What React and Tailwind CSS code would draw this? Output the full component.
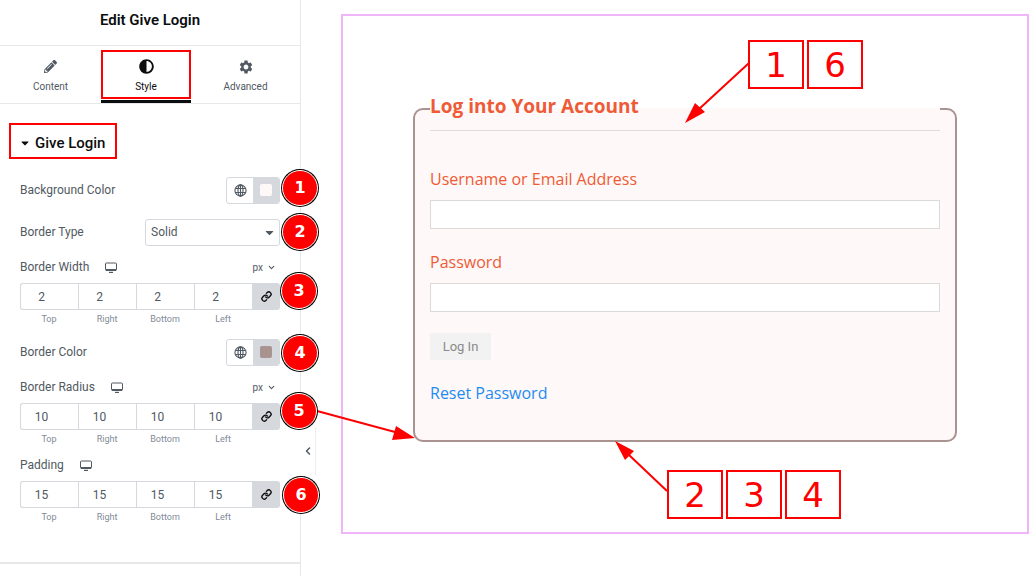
import { useState } from 'react';
import { FaAdjust, FaCaretDown, FaPencilAlt } from 'react-icons/fa';
import { MdSettings } from 'react-icons/md';
import { ChevronDown, ChevronLeft, Link } from 'lucide-react';

const SIDES = ['Top', 'Right', 'Bottom', 'Left'];

// numbered steps next to the panel controls
const BADGES = [
  { n: 1, pos: 'left-[282px] top-[170px]' },
  { n: 2, pos: 'left-[282px] top-[214px]' },
  { n: 3, pos: 'left-[281px] top-[273px]' },
  { n: 4, pos: 'left-[282px] top-[335px]' },
  { n: 5, pos: 'left-[281px] top-[393px]' },
  { n: 6, pos: 'left-[283px] top-[477px]' },
];

function GlobeIcon() {
  return (
    <svg viewBox="0 0 14 14" className="size-[13px]" fill="none" stroke="currentColor" strokeWidth="1.2">
      <circle cx="7" cy="7" r="6" />
      <ellipse cx="7" cy="7" rx="2.7" ry="6" />
      <path d="M7 1v12M1.6 4.8h10.8M1.6 9.2h10.8" />
    </svg>
  );
}

function DesktopIcon() {
  return (
    <svg viewBox="0 0 12 11" className="h-[11px] w-3" fill="none" stroke="currentColor">
      <rect x="0.5" y="1" width="11" height="7.5" rx="1" />
      <path d="M1 8h10" strokeWidth="2" />
      <path d="M4 10.4h4" strokeWidth="1.2" />
    </svg>
  );
}

function Tab({ icon, label, active, className, onClick }) {
  return (
    <button
      type="button"
      onClick={onClick}
      className={`relative flex h-[57px] flex-col items-center pt-3 text-[10px] leading-4 ${active ? 'border-b-[3px] border-[#0c0d0e] text-[#0c0d0e]' : 'text-[#515962]'} ${className}`}
    >
      <span className="flex h-[17px] items-center">{icon}</span>
      <span className="mt-1">{label}</span>
      {active && <span className="absolute inset-x-0 top-1 bottom-[1px] border-2 border-[#ff0000]" />}
    </button>
  );
}

function ColorControl({ label, swatch }) {
  return (
    <div className="flex h-[30px] items-center justify-between">
      <span>{label}</span>
      <div className="flex h-[27px] w-[54px] overflow-hidden rounded-[3px] border border-[#d5d8dc]">
        <button type="button" aria-label={`${label} global`} className="flex flex-1 items-center justify-center">
          <GlobeIcon />
        </button>
        <button type="button" aria-label={label} className="flex w-[26px] items-center justify-center bg-[#d5d8dc]">
          <span className={`size-3 rounded-[2px] ${swatch}`} />
        </button>
      </div>
    </div>
  );
}

function Dimensions({ label, value, unit }) {
  return (
    <div>
      <div className="flex h-4 items-center justify-between">
        <div className="flex items-center gap-4">
          <span>{label}</span>
          <DesktopIcon />
        </div>
        {unit && (
          <button type="button" className="mr-1 flex items-center gap-1 text-[10px]">
            {unit}
            <ChevronDown size={9} strokeWidth={3} />
          </button>
        )}
      </div>
      <div className="mt-2 flex">
        {SIDES.map((side) => (
          <label key={side} className="group flex-1 text-center text-[9px] leading-[11px] text-[#818a96]">
            <input
              type="text"
              defaultValue={value}
              className="mb-1 block h-[27px] w-full border-y border-l border-[#d5d8dc] pr-4 text-center text-[12px] text-[#515962] group-first:rounded-l-[3px]"
            />
            {side}
          </label>
        ))}
        <button
          type="button"
          aria-label="Link values together"
          className="flex h-[27px] w-7 items-center justify-center rounded-r-[3px] bg-[#d5d8dc] text-[#0c0d0e]"
        >
          <Link size={11} strokeWidth={3} />
        </button>
      </div>
    </div>
  );
}

function StylePanel() {
  const [tab, setTab] = useState('Style');

  return (
    <aside className="relative w-[301px] shrink-0 border-r border-[#e6e8ea] font-['Roboto',sans-serif] text-[12px] text-[#515962]">
      <h1 className="flex h-[46px] items-center justify-center border-b border-[#e6e8ea] pb-1 text-[15px] font-semibold text-[#0c0d0e]">
        Edit Give Login
      </h1>

      <div className="flex border-b border-[#e6e8ea]">
        <Tab className="w-[101px]" icon={<FaPencilAlt size={13} />} label="Content" active={tab === 'Content'} onClick={() => setTab('Content')} />
        <Tab className="w-[90px]" icon={<FaAdjust size={15} />} label="Style" active={tab === 'Style'} onClick={() => setTab('Style')} />
        <Tab className="flex-1" icon={<MdSettings size={16} />} label="Advanced" active={tab === 'Advanced'} onClick={() => setTab('Advanced')} />
      </div>

      <div className="border-b-2 border-[#e6e8ea] pb-[39px]">
        <button
          type="button"
          className="mt-[19px] ml-[9px] flex h-9 w-[108px] items-center gap-1 border-2 border-[#ff0000] pt-1 pl-2 text-[15px] font-medium text-[#0c0d0e]"
        >
          <FaCaretDown size={12} />
          Give Login
        </button>

        <div className="mt-4 flex flex-col gap-3 px-5">
          <ColorControl label="Background Color" swatch="bg-[#fff8f8]" />
          <div className="flex h-[30px] items-center justify-between">
            <label htmlFor="border-type">Border Type</label>
            <div className="relative">
              <select
                id="border-type"
                className="h-[27px] w-[135px] appearance-none rounded-[3px] border border-[#d5d8dc] bg-white px-[5px]"
              >
                <option>Solid</option>
                <option>Dashed</option>
                <option>Dotted</option>
              </select>
              <FaCaretDown size={13} className="pointer-events-none absolute top-[7px] right-1" />
            </div>
          </div>
          <Dimensions label="Border Width" value="2" unit="px" />
          <ColorControl label="Border Color" swatch="bg-[#a89391]" />
          <Dimensions label="Border Radius" value="10" unit="px" />
          <Dimensions label="Padding" value="15" />
        </div>
      </div>

      <button
        type="button"
        aria-label="Hide panel"
        className="absolute top-[427px] left-[300px] flex h-12 w-4 items-center justify-center border-r border-[#eceef0] bg-white"
      >
        <ChevronLeft size={12} strokeWidth={3} />
      </button>

      {BADGES.map(({ n, pos }) => (
        <span
          key={n}
          className={`absolute z-10 flex size-9 items-center justify-center rounded-full border border-white bg-[#ff0000] font-['DejaVu_Sans',sans-serif] text-[16px] font-bold text-white ring-1 ring-black ${pos}`}
        >
          {n}
        </span>
      ))}
    </aside>
  );
}

function Callout({ numbers, className }) {
  return (
    <div className={`absolute flex gap-[3px] font-['DejaVu_Sans',sans-serif] text-[34px] leading-none text-[#ff0000] ${className}`}>
      {numbers.map((n) => (
        <span key={n} className="flex h-[49px] w-14 items-center justify-center border-2 border-[#ff0000]">
          {n}
        </span>
      ))}
    </div>
  );
}

function Field({ id, label, type }) {
  return (
    <div>
      <label htmlFor={id} className="mb-[9px] block leading-6 text-[#ee5b36]">
        {label}
      </label>
      <input id={id} type={type} className="block h-[29px] w-full border border-[#dadada] bg-white px-2 text-[14px]" />
    </div>
  );
}

function LoginPreview() {
  return (
    <main className="flex-1 pt-[14px] pr-[7px] pb-[42px] pl-10">
      <div className="relative border-2 border-[#f1b5f9] px-[70px] pt-[71px] pb-[90px]">
        <form onSubmit={(e) => e.preventDefault()} className="font-['Open_Sans',sans-serif] text-[16px]">
          <fieldset className="rounded-[10px] border-2 border-[#a89391] bg-[#fff8f8] px-[15px] pt-9 pb-[35px]">
            <legend className="w-full border-b border-[#e0dcdc] pb-[5px] text-[19px] leading-[38px] font-bold text-[#ee5b36]">
              Log into Your Account
            </legend>
            <div className="flex flex-col items-stretch gap-[21px]">
              <Field id="login" label="Username or Email Address" type="text" />
              <Field id="password" label="Password" type="password" />
              <button
                type="submit"
                className="h-[27px] w-[61px] bg-[#f2f2f2] font-['Roboto',sans-serif] text-[13px] text-[#8a8a8a]"
              >
                Log In
              </button>
              <a href="#reset" className="self-start leading-6 text-[#1e8cf0]">
                Reset Password
              </a>
            </div>
          </fieldset>
        </form>

        <svg className="pointer-events-none absolute top-0 left-0 size-full overflow-visible" fill="#ff0000" stroke="#ff0000">
          <path d="M406 47 355 94M-26 395 52 416M324 475 285 438" strokeWidth="2" />
          <path d="M342 107 352 87 362 96ZM72 422 49 424 53 410ZM272 425 291 435 282 444Z" stroke="none" />
        </svg>
        <Callout numbers={[1, 6]} className="top-6 left-[405px]" />
        <Callout numbers={[2, 3, 4]} className="top-[454px] left-[324px]" />
      </div>
    </main>
  );
}

export default function App() {
  return (
    <div className="flex min-h-screen bg-white">
      <StylePanel />
      <LoginPreview />
    </div>
  );
}
